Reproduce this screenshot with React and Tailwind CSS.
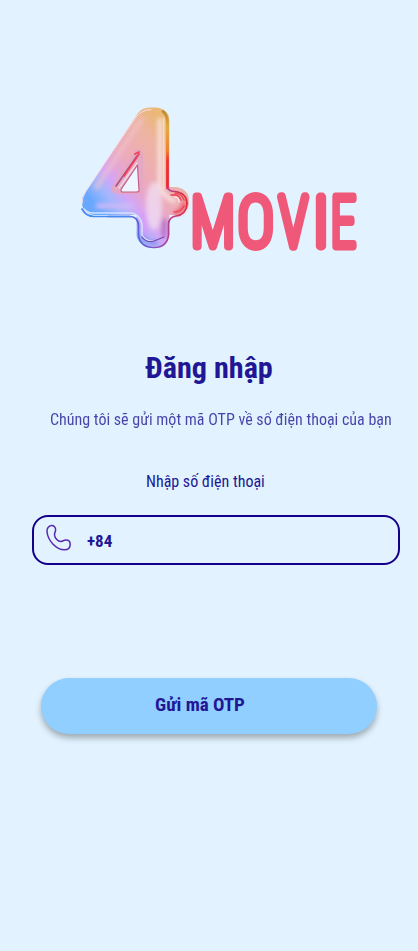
function Logo() {
  return (
    <svg className="block font-['Roboto'] [font-stretch:75%]" width="290" height="160" viewBox="75 100 290 160" overflow="visible" role="img" aria-label="4 MOVIE">
      <defs>
        <linearGradient id="body" gradientUnits="userSpaceOnUse" gradientTransform="scale(.858 1) translate(-88 -235)" x1="160" y1="120" x2="80" y2="187">
          <stop offset="0" stopColor="#ebb877" />
          <stop offset=".18" stopColor="#edb4a2" />
          <stop offset=".48" stopColor="#ecabbb" />
          <stop offset=".6" stopColor="#e5a6d2" />
          <stop offset=".72" stopColor="#d5a5f6" />
          <stop offset=".85" stopColor="#a4b7fc" />
          <stop offset="1" stopColor="#68a8ff" />
        </linearGradient>
        <linearGradient id="edge" gradientUnits="userSpaceOnUse" x1="0" y1="112" x2="0" y2="190">
          <stop offset="0" stopColor="#b98a36" />
          <stop offset=".2" stopColor="#e5a93a" />
          <stop offset=".5" stopColor="#f07f2a" />
          <stop offset=".62" stopColor="#f0322c" />
          <stop offset="1" stopColor="#e9263b" />
        </linearGradient>
        <linearGradient id="foot" gradientUnits="userSpaceOnUse" x1="138" y1="0" x2="186" y2="0">
          <stop offset="0" stopColor="#5a62dc" />
          <stop offset=".5" stopColor="#9c4ab4" />
          <stop offset="1" stopColor="#e5293e" />
        </linearGradient>
        <filter id="soft" filterUnits="userSpaceOnUse" x="75" y="100" width="130" height="160"><feGaussianBlur stdDeviation="2.2" /></filter>
        <filter id="fine" filterUnits="userSpaceOnUse" x="75" y="100" width="130" height="160"><feGaussianBlur stdDeviation=".45" /></filter>
      </defs>
      <text transform="translate(88 235) scale(1.165 1)" fontSize="161" className="font-thin" fill="url(#body)" stroke="url(#body)" strokeWidth="24" strokeLinejoin="round">4</text>
      <g fill="none" strokeLinecap="round" strokeLinejoin="round">
        <g filter="url(#soft)">
          <path d="M160 120V184Q162 196 174 201" stroke="#f7e2e0" strokeWidth="4.500" />
          <ellipse cx="154" cy="206" rx="8" ry="24" fill="#f0dcf1" fillOpacity=".8" />
          <path d="M144 215V235" stroke="#d79af7" strokeWidth="5" />
          <path d="M96 188L142 119" stroke="#f0c3cd" strokeWidth="3" />
          <path d="M98 206H132" stroke="#cdb9f7" strokeWidth="5" />
          <path d="M164 220V236" stroke="#9a58bd" strokeWidth="3" />
          <path d="M176 213Q184 210 184 203" stroke="#ec5368" strokeWidth="4" />
          <path d="M142 236Q147 243 156 243" stroke="#7d7be6" strokeWidth="3" />
        </g>
        <g filter="url(#fine)">
          <path d="M163 111.500Q167.500 115 167.500 124V188" stroke="url(#edge)" strokeWidth="2.800" />
          <path d="M163.800 118V188" stroke="#fbdccb" strokeWidth="1.300" />
          <path d="M168 188Q169 191.500 175 191.500Q187 193 187 204Q186 215 176 216Q169 217 168.500 224V235Q167 247.500 154 247.500Q140 247.500 138.500 235V226Q138 216.500 130 216.500H108" stroke="url(#foot)" strokeWidth="1.700" />
          <path d="M171 195Q179 194 181 200M175 193Q182 194 184 200M174 212Q181 212 184 206" stroke="#ee4958" strokeWidth="1.600" />
          <path d="M175 197Q179 197 179 202" stroke="#fbe6ea" strokeWidth="1.300" />
          <path d="M84 209Q87 213 93 213H132Q140 215 142 224V235Q145 241 153 241" stroke="#d4e2ff" strokeWidth="1.500" />
          <path d="M82 209Q86 216.500 94 216.500H130" stroke="#4688ef" strokeWidth="1.700" />
          <path d="M82 204Q82 197 86 191L136 117Q142 109.500 151 109.500" stroke="#f4dce8" strokeWidth="1" />
          <path d="M142 237Q146 243 154 241L164 237" stroke="#7049a8" strokeWidth="1.200" />
          <path d="M137 150Q142 149 142 157V193H118Q111 192 113 187Z" fill="#e2aac3" stroke="#e6a6c2" strokeWidth="1.800" />
          <path d="M137 156L116 186" stroke="#a9528f" strokeWidth="1.600" />
          <path d="M135 154L139 152M139 154L124 176" stroke="#ef4055" strokeWidth="1.800" />
          <path d="M137 163L119 188" stroke="#f7d9e6" strokeWidth="1.300" />
          <path d="M137.500 165L139 190.500Q139 192 136 192H122Q120 191 122 188Z" fill="#edf6fe" stroke="#c65b8b" strokeWidth="1.200" />
        </g>
      </g>
      <g className="font-thin" fill="#ef5878" stroke="#ef5878" strokeWidth="8.800" strokeLinejoin="round">
        <text transform="translate(191 245.500) scale(.86 1)" fontSize="68">M</text>
        <text transform="translate(238.200 245.500) scale(.88 1)" fontSize="68">O</text>
        <text transform="translate(279.500 245.500) scale(.77 1)" strokeWidth="9.500" fontSize="68">V</text>
        <text transform="translate(313 245.500) scale(.98 1)" fontSize="68">I</text>
        <text transform="translate(331 245.500) scale(.72 1)" fontSize="68">E</text>
      </g>
    </svg>
  );
}

function PhoneIcon() {
  return (
    <svg className="mb-[5px] shrink-0" width="26" height="28" viewBox="0 0 26 28" fill="none" stroke="#5828ae" strokeWidth="1.500" strokeLinejoin="round">
      <path d="M1 7.500C.8 4.500 2.500 1.800 5.500 1.600C8 1.500 9.800 3.500 9.600 6C9.500 8.300 8.300 8.800 8.500 11C8.800 14 12 17.700 15 17.500C17 17.400 17.500 16 19.800 16C22.400 16 24.200 17.800 24.200 20.200C24.200 23.500 22 25.800 18.500 25.800C10 25.800 1.800 16.500 1 7.500Z" />
    </svg>
  );
}

export default function App() {
  return (
    <main className="flex h-[951px] w-[418px] flex-col bg-[#e2f3ff] font-['Roboto_Condensed','Roboto',sans-serif] text-[#211795] [font-stretch:75%]">
      <div className="mt-[100px] ml-[75px]"><Logo /></div>
      <h1 className="mt-[88px] text-center text-[30.200px] leading-10 font-bold">Đăng nhập</h1>
      <p className="mt-[22px] ml-[50px] text-base leading-5 whitespace-nowrap opacity-80">Chúng tôi sẽ gửi một mã OTP về số điện thoại của bạn</p>
      <label className="mt-[42px] ml-[146px] text-base leading-5">Nhập số điện thoại</label>
      <div className="mt-[23px] ml-8 flex h-[50px] w-[368px] items-center rounded-[16px] border-2 border-[#140089] pl-3">
        <PhoneIcon />
        <span className="mt-[3px] ml-[15px] text-[17px] font-bold">+84</span>
      </div>
      <button className="mt-[113px] ml-[41px] h-[56px] w-[336px] rounded-full bg-[#90cfff] pr-[18px] pb-[2px] text-[19px] font-bold shadow-[0_4px_6px_rgba(0,0,0,0.3)]">Gửi mã OTP</button>
    </main>
  );
}
